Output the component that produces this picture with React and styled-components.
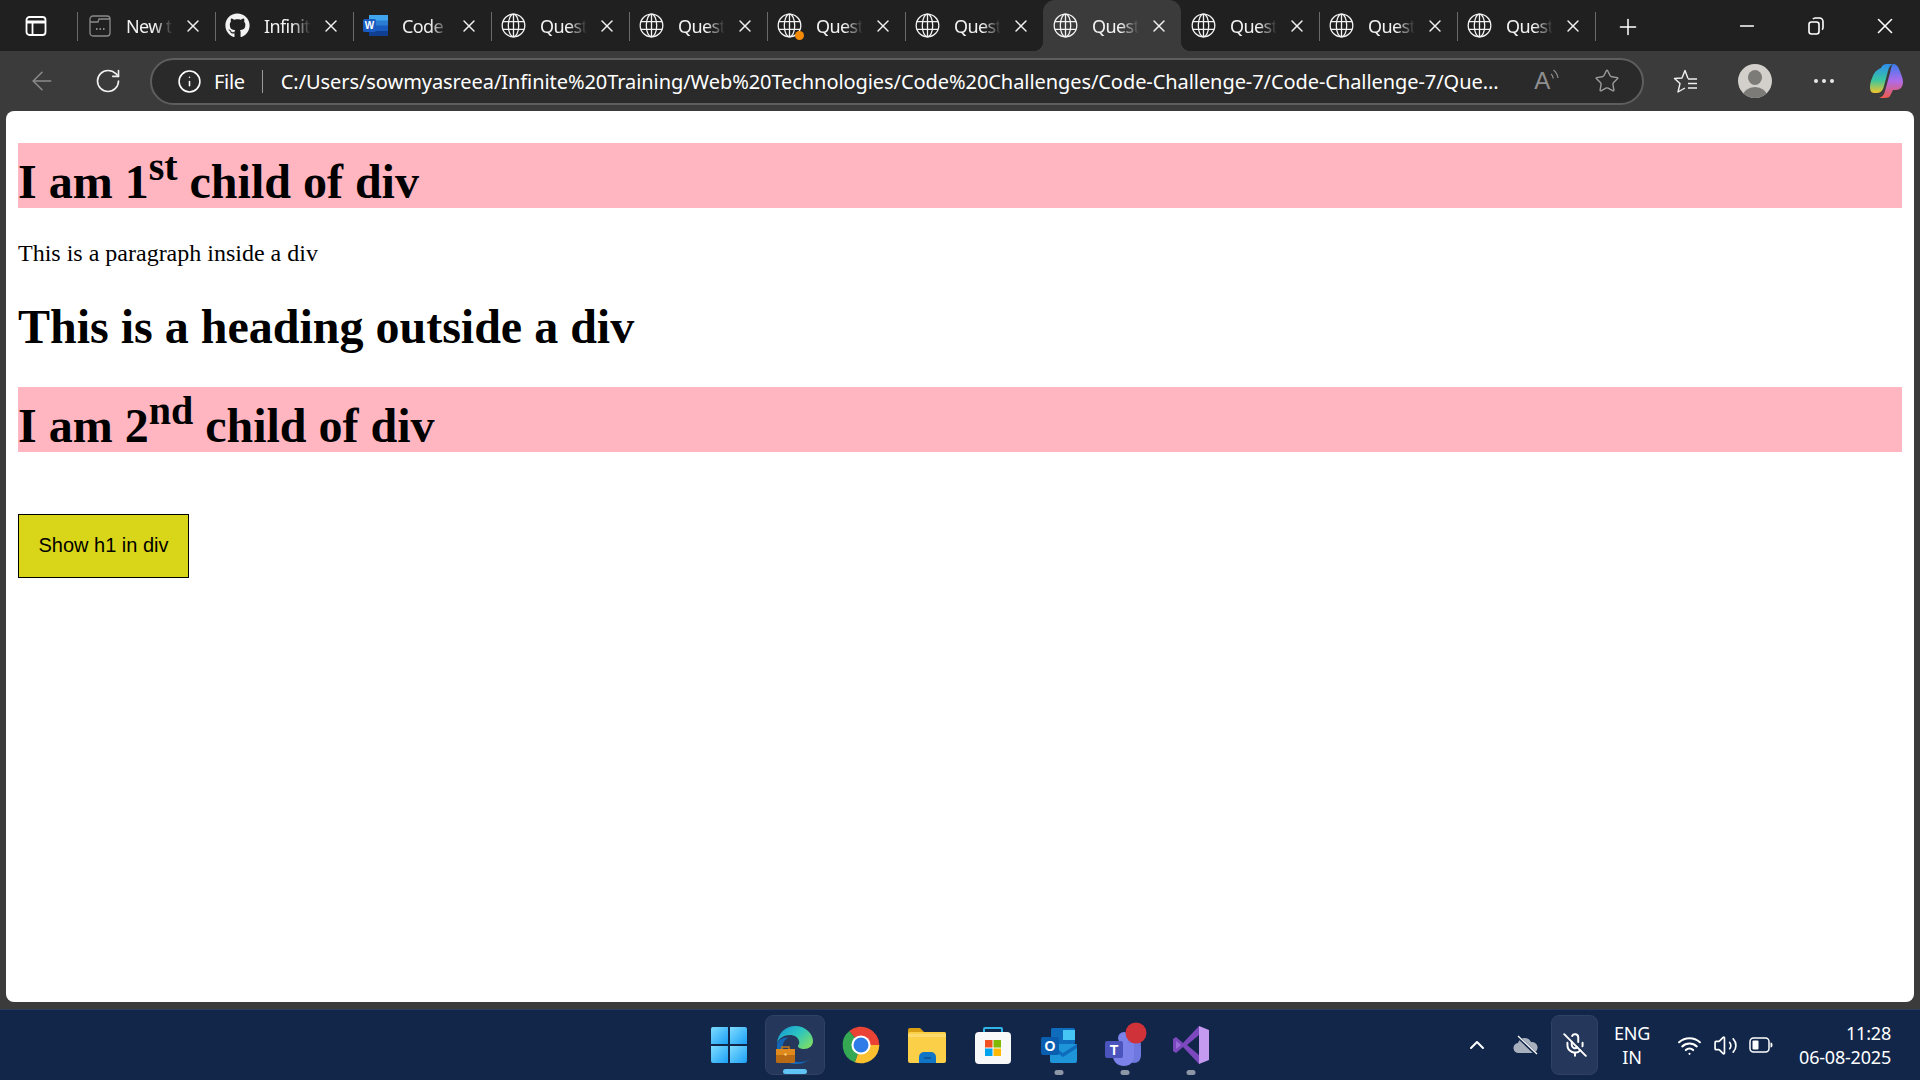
import React from 'react';
import styled, { createGlobalStyle } from 'styled-components';
import { FaGithub } from 'react-icons/fa';
import { X, Plus, Minus, ArrowLeft, RotateCw, Info, Star, ChevronUp, MicOff, Wifi, Volume2 } from 'lucide-react';

const GlobalStyle = createGlobalStyle`
  html, body { margin: 0; padding: 0; height: 100%; overflow: hidden; }
  #root { height: 100%; }
`;

const Frame = styled.div`
  height: 1080px;
  display: flex;
  flex-direction: column;
  background: #3b3b3b;
  color: #fff;
  font-family: "Noto Sans", "Open Sans", sans-serif;
`;

const TabStrip = styled.div`
  height: 51px;
  flex: none;
  display: flex;
  background: #202020;
  padding-right: 1px;
`;

const SidebarSlot = styled.div`
  width: 77px;
  flex: none;
  display: flex;
  align-items: center;
  justify-content: center;
  padding-right: 5px;
  box-sizing: border-box;
`;

const Tab = styled.div`
  position: relative;
  width: 138px;
  flex: none;
  box-sizing: border-box;
  display: flex;
  align-items: center;
  padding-left: 10px;
  background: ${p => (p.$active ? '#3b3b3b' : 'transparent')};
  border-radius: ${p => (p.$active ? '12px 12px 0 0' : '0')};

  &::before {
    content: "";
    position: absolute;
    left: 0;
    top: 12px;
    height: 29px;
    width: 1px;
    background: ${p => (p.$plain ? 'transparent' : '#6a6a6a')};
  }

  ${p => p.$active && `
    &::before, &::after {
      content: "";
      position: absolute;
      bottom: 0;
      top: auto;
      width: 10px;
      height: 10px;
    }
    &::before {
      left: -10px;
      background: radial-gradient(circle at 0 0, transparent 10px, #3b3b3b 10.5px);
    }
    &::after {
      right: -10px;
      background: radial-gradient(circle at 100% 0, transparent 10px, #3b3b3b 10.5px);
    }
  `}
`;

const FavSlot = styled.div`
  position: relative;
  width: 25px;
  height: 25px;
  flex: none;
  display: flex;
  align-items: center;
  justify-content: center;
`;

const AlertDot = styled.span`
  position: absolute;
  right: -2px;
  bottom: -2px;
  width: 9px;
  height: 9px;
  border-radius: 50%;
  background: #f58a07;
`;

const TabTitle = styled.span`
  width: 52px;
  margin-left: 14px;
  overflow: hidden;
  white-space: nowrap;
  font-size: 18px;
  letter-spacing: -0.6px;
  color: #f2f2f2;
  -webkit-mask-image: linear-gradient(to right, #000 55%, transparent 90%);
  mask-image: linear-gradient(to right, #000 55%, transparent 90%);
`;

const TabClose = styled.span`
  display: flex;
  margin-left: 5px;
  color: #f2f2f2;
`;

const NewTabSlot = styled.div`
  width: 66px;
  flex: none;
  display: flex;
  align-items: center;
  justify-content: center;
  border-left: 1px solid #6a6a6a;
  margin: 12px 0 10px;
  padding-right: 2px;
  box-sizing: border-box;
`;

const Spacer = styled.div`
  flex: 1;
`;

const WindowButton = styled.div`
  width: 69px;
  flex: none;
  display: flex;
  align-items: center;
  justify-content: center;
`;

const Toolbar = styled.div`
  height: 60px;
  flex: none;
  display: flex;
  align-items: center;
  padding-left: 9px;
`;

const ToolSlot = styled.div`
  width: ${p => p.$w || 66}px;
  flex: none;
  display: flex;
  align-items: center;
  justify-content: center;
  color: ${p => p.$dim ? '#8c8c8c' : '#f0f0f0'};
`;

const AddressBox = styled.div`
  width: 1494px;
  height: 47px;
  flex: none;
  margin: 0 7px 0 9px;
  box-sizing: border-box;
  display: flex;
  align-items: center;
  padding-left: 25px;
  background: #2a2a2a;
  border: 2px solid #5e5e5e;
  border-radius: 24px;
`;

const FileLabel = styled.span`
  margin-left: 12px;
  font-size: 20px;
  letter-spacing: -0.3px;
`;

const AddressDivider = styled.span`
  width: 1px;
  height: 23px;
  margin: 0 18px 0 17px;
  background: #9a9a9a;
`;

const Url = styled.span`
  width: 1222px;
  flex: none;
  white-space: nowrap;
  font-size: 20px;
  letter-spacing: -0.07px;
`;

const AddressAction = styled.span`
  width: ${p => p.$w}px;
  flex: none;
  display: flex;
  align-items: center;
  justify-content: center;
  color: #9c9c9c;
`;

const ReadGlyph = styled.span`
  font-family: "Liberation Sans", Arial, sans-serif;
  font-size: 24px;
  line-height: 30px;
  color: #8f8f8f;
`;

const ReadWaves = styled.svg`
  width: 9px;
  height: 14px;
  margin-bottom: 10px;
`;

const Avatar = styled.div`
  position: relative;
  width: 34px;
  height: 34px;
  border-radius: 50%;
  background: #d3d0cb;
  overflow: hidden;

  &::before {
    content: "";
    position: absolute;
    left: 10px;
    top: 6px;
    width: 14px;
    height: 15px;
    border-radius: 50%;
    background: #7d7b78;
  }
  &::after {
    content: "";
    position: absolute;
    left: 5px;
    top: 23px;
    width: 24px;
    height: 18px;
    border-radius: 50%;
    background: #7d7b78;
  }
`;

const Dots = styled.span`
  display: flex;
  gap: 4px;

  i {
    width: 4px;
    height: 4px;
    border-radius: 50%;
    background: #e8e8e8;
  }
`;

const PageWrap = styled.div`
  flex: 1;
  display: flex;
  padding: 0 6px 7px;
  min-height: 0;
`;

const Page = styled.main`
  flex: 1;
  background: #fff;
  color: #000;
  border-radius: 8px;
  overflow: hidden;
  padding: 0 12px;
  font-family: "Liberation Serif", "Times New Roman", serif;
  font-size: 24px;
`;

const Heading = styled.h1`
  font-size: 48px;
  font-weight: 700;
  margin: 0.67em 0;
`;

const PinkHeading = styled(Heading)`
  height: 65px;
  background: lightpink;

  sup {
    vertical-align: 18px;
  }
`;

const Paragraph = styled.p`
  margin: 24px 0;
`;

const ShowButton = styled.button`
  display: block;
  width: 171px;
  height: 64px;
  margin-top: 62px;
  padding: 0;
  background: #d9d61a;
  border: 1px solid #000;
  font-family: "Liberation Sans", Arial, sans-serif;
  font-size: 20px;
  color: #000;
`;

const Taskbar = styled.footer`
  height: 71px;
  flex: none;
  box-sizing: border-box;
  display: grid;
  grid-template-columns: 1fr auto 1fr;
  align-items: center;
  background: #12264a;
  border-top: 1px solid #2c3d5c;
`;

const AppRow = styled.div`
  grid-column: 2;
  display: flex;
`;

const AppSlot = styled.div`
  position: relative;
  width: 66px;
  height: 60px;
  display: flex;
  align-items: center;
  justify-content: center;
  box-sizing: border-box;

  ${p => p.$active && `
    background: #25375a;
    border: 1px solid #2f4165;
    border-radius: 8px;
    width: 60px;
    margin: 0 3px;
  `}

  ${p => p.$running && `
    &::after {
      content: "";
      position: absolute;
      left: 50%;
      bottom: 0;
      transform: translateX(-50%);
      width: ${p.$active ? 24 : 9}px;
      height: 5px;
      border-radius: 3px;
      background: ${p.$active ? '#5fc4f5' : '#8e97a8'};
    }
  `}
`;

const Tray = styled.div`
  grid-column: 3;
  display: flex;
  align-items: center;
  justify-content: flex-end;
  padding-right: 29px;
`;

const TrayIcon = styled.div`
  width: ${p => p.$w}px;
  flex: none;
  display: flex;
  align-items: center;
  justify-content: center;
  color: #fff;
`;

const MicBox = styled(TrayIcon)`
  height: 60px;
  box-sizing: border-box;
  background: #25375a;
  border: 1px solid #2f4165;
  border-radius: 8px;
`;

const TrayText = styled.div`
  width: 68px;
  margin-right: 5px;
  flex: none;
  text-align: center;
  font-size: 18px;
  line-height: 24px;
  letter-spacing: -0.2px;
`;

const Clock = styled.div`
  width: 112px;
  flex: none;
  text-align: right;
  font-size: 18px;
  line-height: 24px;
  letter-spacing: -0.2px;
`;

const SidebarIcon = () => (
  <svg width="22" height="22" viewBox="0 0 22 22" fill="none" stroke="#fff" strokeWidth="1.8">
    <rect x="1.5" y="2" width="19" height="18" rx="3" />
    <path d="M2 7h18" strokeWidth="3" />
    <path d="M7.5 7v12.5" />
  </svg>
);

const NewTabIcon = () => (
  <svg width="22" height="24" viewBox="0 0 22 24" fill="none" stroke="#8a8a8a" strokeWidth="1.3">
    <rect x="1" y="2" width="20" height="20" rx="3" />
    <path d="M1 8h8l1-3h11" />
    <path d="M7 15h1.5M10.5 15H12M14 15h1.5" strokeWidth="1.8" />
  </svg>
);

const Globe = ({ size = 25 }) => (
  <svg width={size} height={size} viewBox="0 0 25 25" fill="none" stroke="#f2f2f2" strokeWidth="1.3">
    <circle cx="12.5" cy="12.5" r="11.3" />
    <ellipse cx="12.5" cy="12.5" rx="5.2" ry="11.3" />
    <path d="M12.5 1.2v22.6M1.8 8.6h21.4M1.8 16.4h21.4" />
  </svg>
);

const WordIcon = () => (
  <svg width="25" height="25" viewBox="0 0 25 25">
    <rect x="6" y="2" width="19" height="21" rx="1.5" fill="#2b7cd3" />
    <rect x="6" y="2" width="19" height="5.5" fill="#41a5ee" />
    <rect x="6" y="12.5" width="19" height="5.5" fill="#185abd" />
    <rect x="6" y="18" width="19" height="5" fill="#103f91" />
    <rect x="0" y="6" width="13" height="13" rx="1.5" fill="#1a5cbf" />
    <text x="6.5" y="16" fontSize="10" fontWeight="700" fill="#fff" textAnchor="middle" fontFamily="Liberation Sans">W</text>
  </svg>
);

const RestoreIcon = () => (
  <svg width="16" height="18" viewBox="0 0 16 18" fill="none" stroke="#fff" strokeWidth="1.6">
    <rect x="1" y="5" width="10" height="12" rx="2.5" />
    <path d="M5 2.2C5.5 1.4 6.3 1 7.2 1h4.3C13.4 1 15 2.6 15 4.5v6c0 .9-.4 1.7-1 2.2" />
  </svg>
);

const FavoritesIcon = () => (
  <svg width="26" height="26" viewBox="0 0 26 26" fill="none" stroke="#f0f0f0" strokeWidth="1.4" strokeLinejoin="round">
    <path d="M15 10.5 12 2.5 9 10 1.5 10.5 7 15.5 5 24l7-4" />
    <path d="M15 11h9M15 15.5h9M15 20h9" />
  </svg>
);

const CopilotIcon = () => (
  <svg width="34" height="36" viewBox="0 0 34 36">
    <defs>
      <linearGradient id="copA" x1="0" y1="0" x2="0" y2="1">
        <stop offset="0" stopColor="#2f8df0" />
        <stop offset="0.55" stopColor="#37c6a0" />
        <stop offset="1" stopColor="#f3c52a" />
      </linearGradient>
      <linearGradient id="copB" x1="0" y1="0" x2="0" y2="1">
        <stop offset="0" stopColor="#3a7cf0" />
        <stop offset="0.5" stopColor="#b06be8" />
        <stop offset="1" stopColor="#ef5a4a" />
      </linearGradient>
    </defs>
    <path d="M11 5c1-2.500 3-4 6-4h6c-3 1-4 3-5 7l-4 15c-1 4-3 7-7 7H4C1 30 0 27 0 24c0-3 1-7 2.500-10C4 10 6 7 11 5z" fill="url(#copA)" />
    <path d="M23 1c3 0 5 2 6 5 2 5 4 9 4 13 0 5-3 8-7 8h-3l-2 4c-1 3-3 4-6 4h-6c3-1 5-3 6-7l5-18c1-4 1-7 3-9z" fill="url(#copB)" />
  </svg>
);

const WindowsLogo = () => (
  <svg width="36" height="36" viewBox="0 0 36 36">
    <defs>
      <linearGradient id="winA" x1="0" y1="0" x2="1" y2="1">
        <stop offset="0" stopColor="#7fdcff" />
        <stop offset="1" stopColor="#1aa0f5" />
      </linearGradient>
    </defs>
    <path d="M2 0h15v17H0V2a2 2 0 0 1 2-2z" fill="url(#winA)" />
    <path d="M19 0h15a2 2 0 0 1 2 2v15H19z" fill="url(#winA)" />
    <path d="M0 19h17v17H2a2 2 0 0 1-2-2z" fill="url(#winA)" />
    <path d="M19 19h17v15a2 2 0 0 1-2 2H19z" fill="url(#winA)" />
  </svg>
);

const EdgeIcon = () => (
  <svg width="38" height="38" viewBox="0 0 38 38">
    <defs>
      <linearGradient id="edgeA" x1="0" y1="0" x2="1" y2="0.7">
        <stop offset="0" stopColor="#1493d8" />
        <stop offset="0.55" stopColor="#2cc5c0" />
        <stop offset="1" stopColor="#77dc6c" />
      </linearGradient>
    </defs>
    <path d="M1 17C2 7 10 0 19 0c11 0 18 8 18 15 0 5-4 8-9 8-3 0-6-1-6-3 0-1 2-2 1-5-1-4-5-6-9-6C8 9 3 12 1 17z" fill="url(#edgeA)" />
    <path d="M1 18c2-5 7-7 11-6-4 2-6 6-5 11 1 6 7 13 16 13 5 0 8-1 11-4-4 5-9 6-14 6C9 38 0 30 1 18z" fill="#1266b8" />
    <rect x="0" y="23" width="19" height="14" rx="1.5" fill="#b96a14" />
    <rect x="0" y="23" width="19" height="6" fill="#e08a1e" />
    <path d="M6 23v-2h7v2" fill="none" stroke="#c77a18" strokeWidth="1.500" />
    <rect x="8.500" y="27.500" width="2" height="2" fill="#ffe08a" />
  </svg>
);

const ChromeIcon = () => (
  <svg width="40" height="40" viewBox="0 0 48 48">
    <path d="M24 24 9.860 7.150A22 22 0 0 1 46 24Z" fill="#ea4335" />
    <path d="M24 24H46A22 22 0 0 1 16.500 44.700Z" fill="#fbc02d" />
    <path d="M24 24 16.500 44.700A22 22 0 0 1 9.860 7.150Z" fill="#34a853" />
    <circle cx="24" cy="24" r="11.500" fill="#fff" />
    <circle cx="24" cy="24" r="9" fill="#2f7be8" />
  </svg>
);

const FolderIcon = () => (
  <svg width="38" height="36" viewBox="0 0 38 36">
    <path d="M0 3a2 2 0 0 1 2-2h10l4 4h20a2 2 0 0 1 2 2v5H0z" fill="#d9a013" />
    <rect x="0" y="5" width="38" height="31" rx="2" fill="#fccf49" />
    <path d="M0 7h38v3H0z" fill="#ffdb6e" />
    <path d="M11 36v-6a5 5 0 0 1 5-5h7a5 5 0 0 1 5 5v6z" fill="#1075c7" />
    <path d="M16 31h7" stroke="#0b4f8c" strokeWidth="1.500" />
  </svg>
);

const StoreIcon = () => (
  <svg width="36" height="38" viewBox="0 0 36 38">
    <path d="M9 7V3a1 1 0 0 1 1-1h16a1 1 0 0 1 1 1v4" fill="none" stroke="#31b4e8" strokeWidth="2" />
    <rect x="0" y="6" width="36" height="32" rx="4" fill="#f8f8f8" />
    <rect x="10" y="14" width="7.500" height="7.500" fill="#f25022" />
    <rect x="18.500" y="14" width="7.500" height="7.500" fill="#7fba00" />
    <rect x="10" y="22.500" width="7.500" height="7.500" fill="#00a4ef" />
    <rect x="18.500" y="22.500" width="7.500" height="7.500" fill="#ffb900" />
  </svg>
);

const OutlookIcon = () => (
  <svg width="36" height="36" viewBox="0 0 36 36">
    <rect x="10" y="1" width="24" height="16" rx="1.500" fill="#0f6cbd" />
    <rect x="22" y="3" width="12" height="10" fill="#45c6f5" />
    <path d="M9 17h27v17a2 2 0 0 1-2 2H11a2 2 0 0 1-2-2z" fill="#1d95d8" />
    <path d="M9 17l13 9 14-9v4l-14 9-13-9z" fill="#0f6cbd" />
    <rect x="0" y="10" width="18" height="18" rx="2" fill="#0a5eb0" />
    <text x="9" y="24" fontSize="14" fontWeight="700" fill="#fff" textAnchor="middle" fontFamily="Liberation Sans">O</text>
  </svg>
);

const TeamsIcon = () => (
  <svg width="44" height="46" viewBox="0 0 44 46">
    <circle cx="31" cy="22" r="7" fill="#6f78de" />
    <path d="M24 24h14v9c0 5-3 8-7 8s-7-3-7-8z" fill="#6f78de" />
    <circle cx="21" cy="16" r="6" fill="#7b83eb" />
    <path d="M10 21h21v13c0 6-4 10-10 10s-11-4-11-10z" fill="#7b83eb" />
    <rect x="2" y="19" width="18" height="17" rx="2" fill="#4b53bc" />
    <text x="11" y="32.500" fontSize="14" fontWeight="700" fill="#fff" textAnchor="middle" fontFamily="Liberation Sans">T</text>
    <circle cx="33" cy="11" r="10.500" fill="#cf3238" />
  </svg>
);

const VsIcon = () => (
  <svg width="36" height="38" viewBox="0 0 36 38">
    <path d="M26 0 36 4v30l-10 4z" fill="#c39af0" />
    <path d="M26 0 10 17 3 11 0 13v12l3 2 7-6 16 17 0-9-12-10 12-10z" fill="#7c48bd" />
    <path d="M3 15l5 4-5 4z" fill="#9a6cd8" />
  </svg>
);

const BatteryIcon = () => (
  <svg width="24" height="16" viewBox="0 0 24 16" fill="none">
    <rect x="1" y="1" width="19" height="14" rx="3.500" stroke="#fff" strokeWidth="1.500" />
    <rect x="3.500" y="3.500" width="6" height="9" rx="1" fill="#fff" />
    <path d="M21.500 5.500c1.300 0 2 .8 2 2.500s-.7 2.500-2 2.500z" fill="#fff" />
  </svg>
);

const CloudOff = () => (
  <svg width="26" height="20" viewBox="0 0 26 20">
    <path d="M6 18a5 5 0 0 1-1-10 7 7 0 0 1 13-1 5.500 5.500 0 0 1 2 11z" fill="#a8b0bd" />
    <path d="M4 1l19 18" stroke="#12264a" strokeWidth="3" />
    <path d="M5 1l19 18" stroke="#fff" strokeWidth="1.300" />
  </svg>
);

const tabs = [
  { title: 'New t', icon: <NewTabIcon /> },
  { title: 'Infinit', icon: <FaGithub size={25} color="#f2f2f2" /> },
  { title: 'Code', icon: <WordIcon /> },
  { title: 'Quest', icon: <Globe /> },
  { title: 'Quest', icon: <Globe /> },
  { title: 'Quest', icon: <Globe />, alert: true },
  { title: 'Quest', icon: <Globe /> },
  { title: 'Quest', icon: <Globe />, active: true },
  { title: 'Quest', icon: <Globe />, plain: true },
  { title: 'Quest', icon: <Globe /> },
  { title: 'Quest', icon: <Globe /> },
];

const apps = [
  { id: 'win', icon: <WindowsLogo /> },
  { id: 'edge', icon: <EdgeIcon />, active: true, running: true },
  { id: 'chrome', icon: <ChromeIcon /> },
  { id: 'folder', icon: <FolderIcon /> },
  { id: 'store', icon: <StoreIcon /> },
  { id: 'outlook', icon: <OutlookIcon />, running: true },
  { id: 'teams', icon: <TeamsIcon />, running: true },
  { id: 'vs', icon: <VsIcon />, running: true },
];

const url = 'C:/Users/sowmyasreea/Infinite%20Training/Web%20Technologies/Code%20Challenges/Code-Challenge-7/Code-Challenge-7/Que...';

const App = () => {
  return (
    <Frame>
      <GlobalStyle />
      <TabStrip>
        <SidebarSlot>
          <SidebarIcon />
        </SidebarSlot>
        {tabs.map((tab, i) => (
          <Tab key={i} $active={tab.active} $plain={tab.active || tab.plain}>
            <FavSlot>
              {tab.icon}
              {tab.alert && <AlertDot />}
            </FavSlot>
            <TabTitle>{tab.title}</TabTitle>
            <TabClose>
              <X size={20} strokeWidth={1.7} />
            </TabClose>
          </Tab>
        ))}
        <NewTabSlot>
          <Plus size={26} strokeWidth={1.4} />
        </NewTabSlot>
        <Spacer />
        <WindowButton>
          <Minus size={22} strokeWidth={1.6} />
        </WindowButton>
        <WindowButton>
          <RestoreIcon />
        </WindowButton>
        <WindowButton>
          <X size={26} strokeWidth={1.5} />
        </WindowButton>
      </TabStrip>

      <Toolbar>
        <ToolSlot $dim>
          <ArrowLeft size={30} strokeWidth={1.2} />
        </ToolSlot>
        <ToolSlot>
          <RotateCw size={28} strokeWidth={1.4} />
        </ToolSlot>
        <AddressBox>
          <Info size={25} strokeWidth={1.5} />
          <FileLabel>File</FileLabel>
          <AddressDivider />
          <Url>{url}</Url>
          <AddressAction $w={88}>
            <ReadGlyph>A</ReadGlyph>
            <ReadWaves viewBox="0 0 9 14" fill="none" stroke="#8f8f8f" strokeWidth="1.2">
              <path d="M1 5c1.500 1 2 2.500 2.200 4.500" />
              <path d="M3.500 1c2.500 2 4 4.500 4.500 8" />
            </ReadWaves>
          </AddressAction>
          <AddressAction $w={32}>
            <Star size={26} strokeWidth={1.3} />
          </AddressAction>
        </AddressBox>
        <ToolSlot $w={70}>
          <FavoritesIcon />
        </ToolSlot>
        <ToolSlot $w={68}>
          <Avatar />
        </ToolSlot>
        <ToolSlot $w={70}>
          <Dots>
            <i />
            <i />
            <i />
          </Dots>
        </ToolSlot>
        <ToolSlot $w={56}>
          <CopilotIcon />
        </ToolSlot>
      </Toolbar>

      <PageWrap>
        <Page>
          <PinkHeading>
            I am 1<sup>st</sup> child of div
          </PinkHeading>
          <Paragraph>This is a paragraph inside a div</Paragraph>
          <Heading>This is a heading outside a div</Heading>
          <PinkHeading>
            I am 2<sup>nd</sup> child of div
          </PinkHeading>
          <ShowButton>Show h1 in div</ShowButton>
        </Page>
      </PageWrap>

      <Taskbar>
        <AppRow>
          {apps.map(app => (
            <AppSlot key={app.id} $active={app.active} $running={app.running}>
              {app.icon}
            </AppSlot>
          ))}
        </AppRow>
        <Tray>
          <TrayIcon $w={48}>
            <ChevronUp size={24} strokeWidth={2} />
          </TrayIcon>
          <TrayIcon $w={50}>
            <CloudOff />
          </TrayIcon>
          <MicBox $w={47}>
            <MicOff size={26} strokeWidth={1.8} />
          </MicBox>
          <TrayText>
            ENG
            <br />
            IN
          </TrayText>
          <TrayIcon $w={36}>
            <Wifi size={25} strokeWidth={2} />
          </TrayIcon>
          <TrayIcon $w={36}>
            <Volume2 size={25} strokeWidth={1.6} />
          </TrayIcon>
          <TrayIcon $w={36}>
            <BatteryIcon />
          </TrayIcon>
          <Clock>
            11:28
            <br />
            06-08-2025
          </Clock>
        </Tray>
      </Taskbar>
    </Frame>
  );
};

export default App;
